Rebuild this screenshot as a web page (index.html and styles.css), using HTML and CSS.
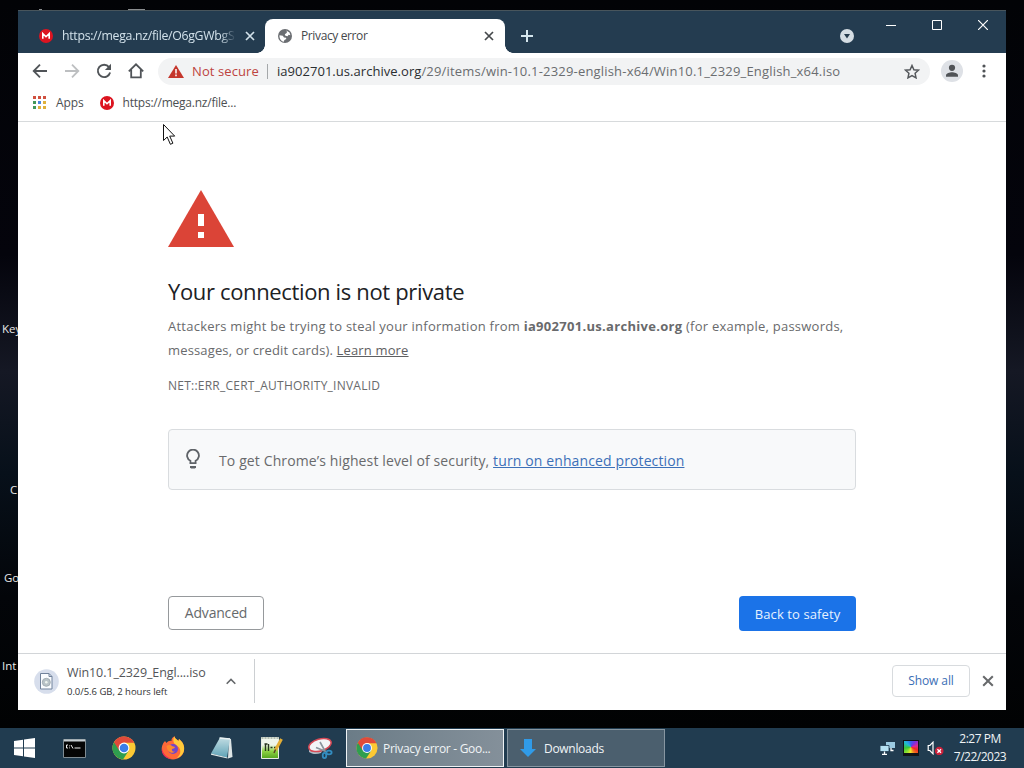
FILE: index.html
```
<!DOCTYPE html>
<html lang="en">
<head>
    <meta charset="UTF-8">
    <meta name="viewport" content="width=device-width, initial-scale=1.0">
    <title>Privacy error</title>
    <link rel="stylesheet" href="styles.css">
</head>
<body>
    <!-- Shared icons -->
    <svg class="defs" width="0" height="0">
        <symbol id="mega" viewBox="0 0 14 14">
            <circle cx="7" cy="7" r="7" fill="#dc1420"/>
            <path d="M3.8 9.7V4.6L7 7.7l3.2-3.1v5.1" fill="none" stroke="#fff" stroke-width="1.6"/>
        </symbol>
        <symbol id="close" viewBox="0 0 10 10">
            <path d="M1 1l8 8M9 1L1 9" fill="none" stroke="currentColor" stroke-width="1.7"/>
        </symbol>
        <symbol id="chrome" viewBox="0 0 24 24">
            <circle cx="12" cy="12" r="11.5" fill="#fcc934"/>
            <path d="M12 12L2 6.3A11.5 11.5 0 0 0 11 23.5L16.5 15z" fill="#2f9e4f"/>
            <path d="M2 6.3A11.5 11.5 0 0 1 22.3 6.7H12L7.2 14.5z" fill="#e04a3a"/>
            <circle cx="12" cy="12" r="5.4" fill="#fff"/>
            <circle cx="12" cy="12" r="4.3" fill="#3b7de8"/>
        </symbol>
    </svg>

    <div class="desktop">
        <span class="shortcut key">Key</span>
        <span class="shortcut c">C</span>
        <span class="shortcut go">Go</span>
        <span class="shortcut int">Int</span>
        <span class="peek peek-a"></span>
        <span class="peek peek-b"></span>

        <div class="window">
            <div class="titlebar">
                <div class="tab">
                    <svg width="14" height="14"><use href="#mega"/></svg>
                    <span class="tab-title faded">https://mega.nz/file/O6gGWbgS</span>
                    <svg class="tab-close" width="10" height="10"><use href="#close"/></svg>
                </div>
                <div class="tab active">
                    <svg width="14" height="14" viewBox="0 0 14 14">
                        <circle cx="7" cy="7" r="7" fill="#6b6e72"/>
                        <path d="M8.2 1.4l3.3 2.1.9 2.7-1.8-.4-1 1.4-2.2-.5-.6-1.5 1.5-.9.8-1.2zM1.5 6.2l3.3.6 1.2 1.6 2 .3.3 1.4-1.9 1-.6 1.6C3 12 1.2 9.5 1.5 6.2z" fill="#fff"/>
                    </svg>
                    <span class="tab-title">Privacy error</span>
                    <svg class="tab-close" width="10" height="10"><use href="#close"/></svg>
                </div>
                <svg class="new-tab" width="12" height="12" viewBox="0 0 12 12"><path d="M6 0v12M0 6h12" stroke="#d4e6ee" stroke-width="2"/></svg>
                <svg class="tab-search" width="14" height="14" viewBox="0 0 14 14"><circle cx="7" cy="7" r="7" fill="#d5dde3"/><path d="M4 5h6L7 9.5z" fill="#263b4c"/></svg>
                <div class="controls">
                    <svg width="10" height="10" viewBox="0 0 10 10"><path d="M0 5.5h10" stroke="#fff"/></svg>
                    <svg width="10" height="10" viewBox="0 0 10 10"><path d="M.5.5h9v9h-9z" fill="none" stroke="#fff"/></svg>
                    <svg width="10" height="10" viewBox="0 0 10 10"><path d="M0 0l10 10M10 0L0 10" stroke="#fff" stroke-width="1.2"/></svg>
                </div>
            </div>

            <div class="toolbar">
                <svg width="16" height="16" viewBox="0 0 16 16"><path d="M15 8H2M8 1.7L1.7 8 8 14.3" fill="none" stroke="#505458" stroke-width="1.8"/></svg>
                <svg width="16" height="16" viewBox="0 0 16 16"><path d="M1 8h13M8 1.7L14.3 8 8 14.3" fill="none" stroke="#bdbfc1" stroke-width="1.8"/></svg>
                <svg width="16" height="16" viewBox="0 0 16 16"><path d="M13 4.1A6.2 6.2 0 1 0 14.1 9.5" fill="none" stroke="#505458" stroke-width="1.9"/><path d="M15 .8v6.1H8.9z" fill="#505458"/></svg>
                <svg width="16" height="16" viewBox="0 0 16 16"><path d="M.8 8.3L8 1.3l7.2 7M3.2 6.8v7.6h9.6V6.8" fill="none" stroke="#505458" stroke-width="1.8"/></svg>
                <div class="omnibox">
                    <svg width="16" height="13" viewBox="0 0 16 13"><path d="M8 0l8 13H0z" fill="#c5362c"/><path d="M8 4v4.5M8 9.5v1.7" stroke="#fff" stroke-width="1.5"/></svg>
                    <span class="not-secure">Not secure</span>
                    <span class="divider"></span>
                    <span class="url"><b>ia902701.us.archive.org</b>/29/items/win-10.1-2329-english-x64/Win10.1_2329_English_x64.iso</span>
                    <svg class="star" width="16" height="15" viewBox="0 0 16 15"><path d="M8 1.5l1.9 4.2 4.6.5-3.4 3.1.9 4.5L8 11.5l-4 2.3.9-4.5L1.5 6.2l4.6-.5z" fill="none" stroke="#55585c" stroke-width="1.5"/></svg>
                </div>
                <svg class="avatar" width="22" height="22" viewBox="0 0 22 22"><circle cx="11" cy="11" r="11" fill="#dee1e6"/><circle cx="11" cy="7.8" r="3.1" fill="#505357"/><path d="M5 16.8v-1.5c0-2 3.8-3 6-3s6 1 6 3v1.5z" fill="#505357"/></svg>
                <svg class="menu" width="4" height="14" viewBox="0 0 4 14"><g fill="#505357"><circle cx="2" cy="2" r="1.6"/><circle cx="2" cy="7" r="1.6"/><circle cx="2" cy="12" r="1.6"/></g></svg>
            </div>

            <div class="bookmarks">
                <svg width="13" height="13" viewBox="0 0 13 13">
                    <path d="M0 1.5h3M5 1.5h3M10 1.5h3" stroke="#d0503f" stroke-width="3"/>
                    <path d="M0 6.5h3M0 11.5h3" stroke="#43985b" stroke-width="3"/>
                    <path d="M5 6.5h3" stroke="#4a86e0" stroke-width="3"/>
                    <path d="M10 6.5h3M5 11.5h3M10 11.5h3" stroke="#dfb13c" stroke-width="3"/>
                </svg>
                <span class="apps">Apps</span>
                <svg width="14" height="14"><use href="#mega"/></svg>
                <span class="bookmark">https://mega.nz/file...</span>
            </div>

            <div class="page">
                <svg class="warning" width="66" height="57" viewBox="0 0 66 57"><path d="M33 0l33 57H0z" fill="#db4437"/><path d="M30 24h6v12h-6zM30 42h6v6h-6z" fill="#fff"/></svg>
                <h1>Your connection is not private</h1>
                <p class="message"><span class="line1">Attackers might be trying to steal your information from <strong>ia902701.us.archive.org</strong> (for example, passwords,</span><br><span class="line2">messages, or credit cards). <a href="#">Learn more</a></span></p>
                <p class="code">NET::ERR_CERT_AUTHORITY_INVALID</p>
                <div class="hint">
                    <svg width="14" height="20" viewBox="0 0 14 20"><path d="M4.4 14.2v-2.4a5.9 5.9 0 1 1 5.2 0v2.4z" fill="none" stroke="#5f6368" stroke-width="1.8"/><path d="M4 17h6v1.2L9 19.5H5L4 18.2z" fill="#5f6368"/></svg>
                    <span class="hint-text">To get Chrome’s highest level of security, <a href="#">turn on enhanced protection</a></span>
                </div>
                <div class="buttons">
                    <button class="advanced">Advanced</button>
                    <button class="safety">Back to safety</button>
                </div>
            </div>

            <div class="shelf">
                <svg width="25" height="25" viewBox="0 0 25 25">
                    <circle cx="12.5" cy="12.5" r="12.3" fill="#d7deec"/>
                    <path d="M6.5 4.5H15l3 3V20H6.5z" fill="#fafcff" stroke="#71829b"/>
                    <path d="M15 4.5v3h3" fill="none" stroke="#71829b"/>
                    <circle cx="12.3" cy="13.3" r="4" fill="#b9c3c8" stroke="#a3aeb4"/>
                    <circle cx="12.3" cy="13.3" r="1.3" fill="#eef4ef"/>
                </svg>
                <div class="download">
                    <div class="file">Win10.1_2329_Engl....iso</div>
                    <div class="progress">0.0/5.6 GB, 2 hours left</div>
                </div>
                <svg class="chevron" width="10" height="7" viewBox="0 0 10 7"><path d="M.7 5.8L5 1.5l4.3 4.3" fill="none" stroke="#65686b" stroke-width="1.6"/></svg>
                <span class="shelf-divider"></span>
                <button class="show-all">Show all</button>
                <svg class="shelf-close" width="12" height="12"><use href="#close"/></svg>
            </div>
        </div>

        <!-- Mouse pointer -->
        <svg class="cursor" width="13" height="22" viewBox="0 0 13 22"><path d="M.5.5v16L4.2 13l3.2 7.3 2.5-1.1-3.2-7.1h5z" fill="#fff" stroke="#111"/></svg>
    </div>

    <div class="taskbar">
        <div class="launchers">
            <svg class="start" width="21" height="20" viewBox="0 0 21 20"><path d="M0 2.9l9-1.2v7.8H0zM10 1.5L21 0v9.5H10zM0 10.5h9v7.8l-9-1.2zM10 10.5h11V20l-11-1.5z" fill="#fff"/></svg>
            <svg width="23" height="19" viewBox="0 0 23 19"><path d="M.5.5h22v18H.5z" fill="#050505" stroke="#7f8b92"/><path d="M1 1.5h21" stroke="#c5ccd0" stroke-width="2"/><path d="M5 6H3.5v3H5M6.5 6.5v.8M6.5 8.5v.8M8 6l2 3.5M11.5 9h6" fill="none" stroke="#eee"/></svg>
            <svg width="24" height="24"><use href="#chrome"/></svg>
            <svg width="24" height="24" viewBox="0 0 24 24">
                <path d="M4 5l1.5 2C7 5 9 4.5 10.5 5 10 2.5 12 1 13.5.3c0 2 2 3 4 4.7l.5-2c4 3 5.8 7 5 11.500C22 20 17.5 23.5 12 23.5S1.5 19.5.8 14.5C.3 11 1.5 7.5 4 5z" fill="#ff6838"/>
                <path d="M13.500.3c0 2 2 3 4 4.700l.5-2c4 3 5.800 7 5 11.500-.8 4-4 7-7.500 7.500 3-2 4.500-5 3.500-8.500S14 9 13 7s-1-4.500.5-6.700z" fill="#ffca3a"/>
                <path d="M1 12c.5 6 5 10 10 10.500-6 1-10-4-10.200-8z" fill="#e8265c"/>
                <circle cx="12" cy="13" r="5" fill="#7347c9"/>
                <path d="M5.5 10c2-1.500 4.500-1 6 .3l2.500.7c-.5 1.500-2 1.500-3 2-.5 2 1 3 3 2.500-3 3-8 .5-8.500-5.500z" fill="#ff8a2c"/>
            </svg>
            <svg width="24" height="24" viewBox="0 0 24 24">
                <defs>
                    <linearGradient id="pad" x1="0" y1="0" x2="0" y2="1"><stop offset="0" stop-color="#c3dde3"/><stop offset="1" stop-color="#5fa3b7"/></linearGradient>
                </defs>
                <path d="M19 2.500l2 .5 1.500 18-4.500 1.500z" fill="#dde5e6"/>
                <path d="M10 1.500l10 1-3 19-16-4z" fill="url(#pad)"/>
                <path d="M1 17.500l16.500 4v1L1 18.800z" fill="#e3ebeb"/>
                <path d="M9.500 2L20 3" stroke="#e9f0f1" stroke-width="1.5"/>
            </svg>
            <svg width="24" height="24" viewBox="0 0 24 24">
                <defs>
                    <linearGradient id="npp" x1="0" y1="0" x2="0" y2="1"><stop offset=".35" stop-color="#eff5ea"/><stop offset=".65" stop-color="#8fd345"/><stop offset="1" stop-color="#53a51e"/></linearGradient>
                </defs>
                <path d="M2.5 1.5h17v21h-17z" fill="url(#npp)" stroke="#e6ece3"/>
                <path d="M5.500 8h3M6.500 8v7M9.500 8v7M11.500 11.500h2M15 11.500h2" stroke="#26351d" stroke-width="1.4"/>
                <path d="M2.500 2h17" stroke="#b2bcb0" stroke-width="2" stroke-dasharray="2 1"/>
                <path d="M22.500 3L16.500 14" stroke="#e4ae35" stroke-width="3"/><path d="M16.500 13.500L15 17" stroke="#594322" stroke-width="1.5"/>
            </svg>
            <svg width="26" height="24" viewBox="0 0 26 24">
                <path d="M2 13c4 3 9 1 14 0l-2 4c-5 2-9 1-12-1z" fill="#aeb9c2"/>
                <ellipse cx="13" cy="9" rx="11.5" ry="6" transform="rotate(-16 13 9)" fill="#f3f5f7" stroke="#d64955" stroke-width="1.5"/>
                <path d="M13 6l5 9M9 11.500l10 4" stroke="#8b959e" stroke-width="1.6"/>
                <ellipse cx="17.500" cy="19.500" rx="1.800" ry="2.600" fill="none" stroke="#338dc0" stroke-width="1.8"/>
                <ellipse cx="22" cy="16.500" rx="2.600" ry="1.800" fill="none" stroke="#338dc0" stroke-width="1.8"/>
            </svg>
        </div>
        <div class="task current"><svg width="22" height="22"><use href="#chrome"/></svg><span>Privacy error - Goo...</span></div>
        <div class="task"><svg width="16" height="18" viewBox="0 0 16 18"><path d="M4 0h8v10h4l-8 8-8-8h4z" fill="#309be8"/></svg><span>Downloads</span></div>
        <div class="tray">
            <svg width="15" height="14" viewBox="0 0 15 14"><path d="M6 1h9v6H6z" fill="#9bcbe2"/><path d="M0 4.5h9v6H0z" fill="#b5e1f2" stroke="#203b50" stroke-width=".8"/><path d="M4.5 10.500V13M2 13.300h5M11 7v2.500h2.500" fill="none" stroke="#fff" stroke-width="1.3"/></svg>
            <div class="palette"></div>
            <svg width="17" height="14" viewBox="0 0 17 14"><path d="M1.200 4.500h1.700L6 1.200v11.600L2.900 9.500H1.200z" fill="none" stroke="#fff" stroke-width="1.200"/><circle cx="12.200" cy="10" r="4.300" fill="#cc213b"/><path d="M10.400 8.200l3.600 3.600M14 8.200l-3.600 3.600" stroke="#fff" stroke-width="1.300"/></svg>
            <div class="clock"><span class="time">2:27 PM</span><span class="date">7/22/2023</span></div>
        </div>
    </div>
</body>
</html>
```
FILE: styles.css
```
body {
    margin: 0;
    width: 1024px;
    height: 768px;
    overflow: hidden;
    display: flex;
    flex-direction: column;
    font-family: "Open Sans", "Noto Sans", sans-serif;
    font-size: 12px;
    background: #030407;
}
svg {
    display: block;
    flex: none;
}
span {
    white-space: nowrap;
}
.defs {
    position: absolute;
}

/* Desktop */
.desktop {
    position: relative;
    height: 728px;
    background: linear-gradient(180deg, #020306 0%, #04040c 35%, #151824 51%, #07101a 65%, #030509 82%, #010203 100%);
}
.shortcut {
    position: absolute;
    color: #e8e8e8;
    font-size: 11.5px;
    line-height: 16px;
}
.key { left: 2px; top: 321px; }
.c { left: 10px; top: 482px; }
.go { left: 4px; top: 570px; }
.int { left: 2px; top: 658px; }
.peek {
    position: absolute;
    top: 9px;
    height: 1px;
    background: #8a8d8f;
}
.peek-a { left: 39px; width: 3px; }
.peek-b { left: 128px; width: 17px; }

/* Browser window */
.window {
    position: absolute;
    left: 18px;
    top: 10px;
    width: 988px;
    height: 700px;
    display: flex;
    flex-direction: column;
    background: #fff;
}
.titlebar {
    height: 43px;
    display: flex;
    align-items: flex-end;
    background: #243c50;
    border-top: 1px solid #48555c;
    box-sizing: border-box;
}
.tab {
    position: relative;
    width: 247px;
    height: 34px;
    padding: 0 10px 0 21px;
    box-sizing: border-box;
    display: flex;
    align-items: center;
    gap: 9px;
    color: #d2e1ea;
}
.tab.active {
    width: 240px;
    padding: 0 11px 0 13px;
    background: #fff;
    color: #45484b;
    border-radius: 8px 8px 0 0;
}
/* Curved feet of the selected tab */
.tab.active::before,
.tab.active::after {
    content: '';
    position: absolute;
    bottom: 0;
    width: 8px;
    height: 8px;
}
.tab.active::before {
    left: -8px;
    background: radial-gradient(circle at 0 0, transparent 7.5px, #fff 8px);
}
.tab.active::after {
    right: -8px;
    background: radial-gradient(circle at 100% 0, transparent 7.5px, #fff 8px);
}
.tab-title {
    padding-bottom: 1px;
    font-size: 12px;
    letter-spacing: -0.38px;
}
.tab-title.faded {
    width: 174px;
    font-size: 12.3px;
    letter-spacing: -0.3px;
    -webkit-mask-image: linear-gradient(90deg, #000 91%, transparent);
    mask-image: linear-gradient(90deg, #000 91%, transparent);
}
.tab-close {
    margin-left: auto;
}
.new-tab {
    margin: 0 0 11px 16px;
}
.tab-search {
    margin: 0 0 10px auto;
}
.controls {
    align-self: flex-start;
    display: flex;
    gap: 36px;
    margin: 9px 18px 0 32px;
}
.toolbar {
    height: 36px;
    display: flex;
    align-items: center;
    gap: 16px;
    padding: 0 20px 0 14px;
}
.omnibox {
    flex: 1;
    height: 27px;
    margin-left: -2px;
    padding: 0 10px;
    display: flex;
    align-items: center;
    background: #f2f3f4;
    border-radius: 14px;
}
.not-secure {
    margin-left: 8px;
    color: #bd4440;
    font-size: 13px;
    letter-spacing: 0.1px;
}
.divider {
    width: 1px;
    height: 15px;
    margin: 0 9px 0 8px;
    background: #a5a8aa;
}
.url {
    color: #6a6d70;
    font-size: 13px;
    letter-spacing: 0.19px;
}
.url b {
    font-weight: normal;
    letter-spacing: 0.04px;
    color: #2b2e31;
}
.star {
    margin-left: auto;
}
.avatar {
    margin-left: -5px;
}
.menu {
    margin-left: 3px;
}
.bookmarks {
    height: 29px;
    padding: 0 15px 3px;
    display: flex;
    align-items: center;
    border-bottom: 1px solid #d7dadc;
    color: #4c4f52;
}
.bookmarks svg {
    margin-bottom: 2px;
}
.bookmarks span {
    padding-bottom: 2px;
}
.apps {
    margin: 0 16px 0 10px;
    letter-spacing: -0.1px;
}
.bookmark {
    margin-left: 9px;
    letter-spacing: -0.23px;
}

/* Interstitial page */
.page {
    flex: 1;
    padding: 68px 150px 0;
    color: #696a6c;
}
h1 {
    margin: 28px 0 0;
    font-size: 22px;
    font-weight: normal;
    line-height: 32px;
    letter-spacing: -0.35px;
    color: #202124;
}
p {
    margin: 0;
}
.message {
    margin-top: 7px;
    font-size: 13px;
    line-height: 24px;
}
.line1 {
    letter-spacing: 0.24px;
}
.line1 strong {
    letter-spacing: 0.3px;
}
.line2 {
    letter-spacing: 0.15px;
}
.message a {
    color: #5f6062;
}
.code {
    margin-top: 16px;
    font-size: 12px;
    line-height: 16px;
    letter-spacing: 0.24px;
}
.hint {
    margin-top: 35px;
    height: 61px;
    box-sizing: border-box;
    padding: 0 17px;
    display: flex;
    align-items: center;
    gap: 19px;
    background: #f8f9fa;
    border: 1px solid #d9dcdf;
    border-radius: 4px;
    font-size: 14px;
}
.hint svg {
    margin-bottom: 1px;
}
.hint-text {
    padding-top: 2px;
    letter-spacing: 0.12px;
}
.hint a {
    color: #3c70b8;
}
button {
    font-family: inherit;
    padding: 0;
    border-radius: 4px;
    background: #fff;
}
.buttons {
    display: flex;
    justify-content: space-between;
    margin-top: 106px;
}
.advanced {
    width: 96px;
    height: 34px;
    padding-bottom: 2px;
    border: 1px solid #96999c;
    color: #66696b;
    font-size: 14px;
    letter-spacing: -0.2px;
}
.safety {
    width: 117px;
    height: 35px;
    border: 0;
    background: #1b73e8;
    color: #e6f2ff;
    font-size: 13px;
    font-weight: 500;
    letter-spacing: 0.1px;
}

/* Download shelf */
.shelf {
    height: 54px;
    padding: 0 12px 2px 16px;
    display: flex;
    align-items: center;
    border-top: 1px solid #d2d5d8;
}
.download {
    width: 150px;
    margin: 2px 0 0 8px;
}
.file {
    font-size: 12.5px;
    line-height: 19px;
    letter-spacing: -0.1px;
    color: #535558;
}
.progress {
    font-size: 9.5px;
    line-height: 20px;
    letter-spacing: -0.03px;
    color: #303234;
}
.chevron {
    margin: 1px 0 0 9px;
}
.shelf-divider {
    width: 1px;
    height: 44px;
    margin-left: 18px;
    background: #cccfd2;
}
.show-all {
    margin-left: auto;
    width: 78px;
    height: 32px;
    padding-bottom: 1px;
    border: 1px solid #d8dbde;
    color: #3b6eb5;
    font-size: 12px;
    font-weight: 500;
    letter-spacing: -0.1px;
}
.shelf-close {
    margin-left: 12px;
    color: #67696b;
}
.cursor {
    position: absolute;
    left: 163px;
    top: 124px;
}

/* Taskbar */
.taskbar {
    height: 40px;
    display: flex;
    align-items: center;
    background: #213c50;
    color: #f0f4f6;
}
.launchers {
    width: 345px;
    padding-left: 1px;
    display: grid;
    grid-template-columns: repeat(7, 49px);
    justify-items: center;
    align-items: center;
}
.start {
    margin-right: 3px;
}
.task {
    width: 158px;
    height: 38px;
    margin-right: 3px;
    padding-left: 12px;
    box-sizing: border-box;
    display: flex;
    align-items: center;
    gap: 8px;
    background: #4b5f6e;
    border: 1px solid #8796a1;
    letter-spacing: -0.3px;
}
.task.current {
    padding-left: 9px;
    gap: 5px;
    background: linear-gradient(90deg, #6b7c87, #84909a);
    border-color: #eef2f4;
}
.tray {
    margin-left: auto;
    margin-right: 17px;
    display: flex;
    align-items: center;
    gap: 8px;
}
.palette {
    width: 14px;
    height: 12px;
    border: 1px solid #101318;
    border-bottom-width: 3px;
    background: radial-gradient(circle, #ffffffb0, transparent 45%),
        conic-gradient(from 0deg, #2733df, #c034cf, #ed2522, #ee7b21, #e9e42a, #37c638, #36bdd5, #2733df);
    background: conic-gradient(from 0deg, #3a5cf0, #7a2fe0 40deg, #e02890 80deg, #f02a22 115deg, #f07a20 150deg, #f0e82a 185deg, #8fe030 220deg, #37c638 260deg, #20b8d8 310deg, #3a5cf0);
}
.clock {
    width: 54px;
    margin-left: 1px;
    display: flex;
    flex-direction: column;
    align-items: center;
    font-size: 12px;
    line-height: 18px;
    letter-spacing: -0.5px;
}
```
